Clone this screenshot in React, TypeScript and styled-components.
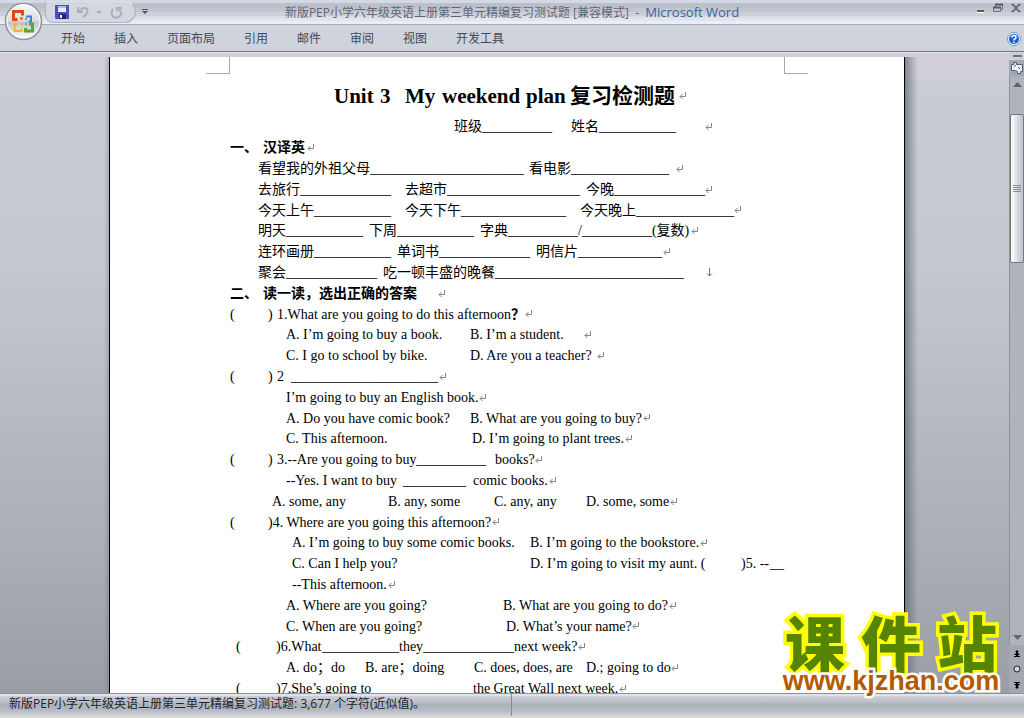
import React from 'react';
import styled, { createGlobalStyle } from 'styled-components';

const GlobalStyle = createGlobalStyle`
  * { box-sizing: border-box; }
  html, body, #root { height: 100%; margin: 0; }
  body { overflow: hidden; font-family: "Open Sans", "Noto Sans CJK SC", sans-serif; font-size: 12px; color: #3f4653; }
  button { border: 0; padding: 0; margin: 0; background: none; font: inherit; color: inherit; }
  svg { display: block; }
`;

const Shell = styled.div`
  height: 100vh;
  display: flex;
  flex-direction: column;
`;

const Header = styled.header`
  position: relative;
  flex: none;
`;

const OfficeButton = styled.button`
  position: absolute;
  left: 4px;
  top: 1px;
`;

const TitleBar = styled.div`
  height: 25px;
  display: grid;
  grid-template-columns: 1fr auto 1fr;
  align-items: start;
  border-bottom: 1px solid #a5abb8;
  background: linear-gradient(#d3d9e4 0 3px, #bcc0c9 3px 8px, #c2c6cf 8px 12px, #cdd0d8 12px 16px, #dadde3 16px 18px, #e3e5e8 18px 21px, #eaedf4 21px);
`;

const QuickAccess = styled.div`
  display: flex;
  align-items: center;
  padding-left: 45px;
  gap: 6px;
`;

const QuickPill = styled.div`
  display: flex;
  align-items: center;
  width: 91px;
  height: 22px;
  margin-top: 1px;
  padding: 0 12px 0 9px;
  justify-content: space-between;
  background: #d3d7df;
  border: 1px solid #b0b4be;
  border-top-color: #dfe2ea;
  border-radius: 0 11px 11px 8px;
`;

const WindowTitle = styled.h1`
  margin: 0;
  font-size: 12px;
  line-height: 25px;
  font-weight: 400;
  color: #5f6672;
  white-space: pre;
`;

const AppName = styled.span`
  color: #2f66a5;
  font-size: 13px;
`;

const WindowControls = styled.div`
  display: flex;
  justify-content: flex-end;
  gap: 8px;
  padding: 3px 3px 0 0;
`;

const Ribbon = styled.nav`
  display: flex;
  align-items: center;
  gap: 29px;
  height: 27px;
  padding: 1px 3px 0 61px;
  background: #cfd3dc;
  border-bottom: 1px solid #747982;
`;

const Tab = styled.button`
  line-height: 24px;
  color: #414957;
`;

const HelpButton = styled.button`
  margin-left: auto;
`;

const Workspace = styled.div`
  flex: 1;
  min-height: 0;
  display: flex;
  background: linear-gradient(#e4e5ea 0 1px, #d1ced9 1px 28px, #c9ccd5 28px, #c5c8d1 210px, #b4b7c0 400px, #a3a7af 560px, #999ea5);
`;

const Desk = styled.main`
  flex: 1;
  min-width: 0;
  display: flex;
  padding: 5px 91px 0 104px;
  overflow: hidden;
`;

const LeftShadow = styled.div`
  flex: none;
  width: 5px;
  background: linear-gradient(to right, transparent, rgba(90, 95, 108, 0.3));
`;

const RightShadow = styled.div`
  flex: none;
  width: 13px;
  background: linear-gradient(to right, rgba(90, 95, 108, 0.65), transparent);
`;

const Page = styled.article`
  flex: 1;
  min-width: 0;
  overflow: hidden;
  background: #fff;
  border: solid #000;
  border-width: 0 1px;
  color: #000;
  font-family: "Liberation Serif", "Noto Sans CJK SC", serif;
  font-size: 14px;
`;

const MarginMarks = styled.div`
  display: flex;
  justify-content: space-between;
  height: 17px;
  padding: 0 96px;
`;

const Corner = styled.span<{ $end?: boolean }>`
  width: 24px;
  border: solid #a6a6b0;
  border-width: ${p => (p.$end ? '0 0 1px 1px' : '0 1px 1px 0')};
`;

const DocBody = styled.div`
  padding: 7px 0 0 120px;
`;

const Line = styled.p`
  display: flex;
  align-items: center;
  height: 21px;
  margin: 0;
  line-height: 21px;
  white-space: pre;
  &:nth-child(5n) { height: 20px; }
`;

const DocTitle = styled.h2`
  display: flex;
  align-items: center;
  height: 30px;
  margin: 0 0 5px;
  font-size: 21px;
  line-height: 30px;
  font-weight: 700;
  white-space: pre;
`;

const Run = styled.span<{ $width?: number; $bold?: boolean }>`
  flex: none;
  ${p => p.$width !== undefined && `width: ${p.$width}px;`}
  font-weight: ${p => (p.$bold ? 700 : 'inherit')};
`;

const StatusBar = styled.footer`
  flex: none;
  height: 25px;
  display: flex;
  align-items: stretch;
  border-top: 1px solid #8d919b;
  border-bottom: 2px solid #dcdad5;
  background: linear-gradient(#dfe2e7 0 2px, #cdd0d8 2px, #b9bcc5 9px, #acb0b9 10px, #b5b9c2 16px, #cfd3dc);
  color: #20242c;
`;

const StatusText = styled.div`
  width: 50%;
  padding-left: 9px;
  line-height: 20px;
  border-right: 1px solid #858a94;
  white-space: pre;
`;

const ScrollColumn = styled.div`
  width: 15px;
  flex: none;
  display: flex;
  flex-direction: column;
  align-items: stretch;
  background: #a3a7b0;
`;

const SplitArea = styled.div`
  height: 8px;
  padding: 3px 2px 3px 4px;
  background: #d1ced9;
`;

const SplitHandle = styled.div`
  height: 2px;
  background: #6c7078;
`;

const ScrollButton = styled.button<{ $height: number }>`
  display: flex;
  align-items: center;
  justify-content: center;
  height: ${p => p.$height}px;
  flex: none;
`;

const Track = styled.div`
  flex: 1;
  display: flex;
  flex-direction: column;
  border-left: 1px solid #8d919a;
  background: #afb3bc;
`;

const Thumb = styled.div`
  height: 149px;
  margin-top: 22px;
  display: flex;
  align-items: center;
  justify-content: center;
  border: 1px solid #747880;
  border-radius: 2px;
  background: linear-gradient(to right, #fbf8ee 0 3px, #e6e6ef 3px 6px, #d3d5df 6px 9px, #c4c8d2 9px);
`;

const Spacer = styled.div`
  flex: 1;
`;

const Brand = styled.a`
  position: absolute;
  right: 19px;
  bottom: 22px;
  width: 228px;
  text-align: center;
  text-decoration: none;
  font-family: "Liberation Sans", "Noto Sans CJK SC", sans-serif;
  font-weight: 700;
  paint-order: stroke fill;
`;

const BrandName = styled.span`
  display: grid;
  grid-template-columns: repeat(3, 1fr);
  font-family: "Noto Sans CJK SC", sans-serif;
  font-size: 60px;
  line-height: 50px;
  font-weight: 900;
  color: #568400;
  -webkit-text-stroke: 7px #ffff00;
`;

const BrandUrl = styled.span`
  display: block;
  font-size: 27px;
  line-height: 30px;
  color: #b45a00;
  -webkit-text-stroke: 5px #fff;
`;

const ReturnMark = () => (
  <svg width="8" height="8" viewBox="0 0 8 8" fill="none" stroke="#858585" aria-hidden="true">
    <path d="M6.5 0V4.5H1M3.5 2L1 4.5L3.5 7" />
  </svg>
);

const BreakMark = () => (
  <svg width="7" height="9" viewBox="0 0 7 9" fill="none" stroke="#707070" aria-hidden="true">
    <path d="M3.5 0V8M1 5.5L3.5 8L6 5.5" />
  </svg>
);

type Part = [column: number, text: string, bold?: boolean];
const RETURN = '\r';
const BREAK = '\n';
const blank = (count: number) => '_'.repeat(count);

const lines: Part[][] = [
  [[224, '班级' + blank(10)], [341, '姓名' + blank(11)], [475, RETURN]],
  [[0, '一、', true], [33, '汉译英', true], [77, RETURN]],
  [[28, '看望我的外祖父母' + blank(22)], [299, '看电影' + blank(14)], [446, RETURN]],
  [[28, '去旅行' + blank(13)], [175, '去超市' + blank(19)], [356, '今晚' + blank(13)], [475, RETURN]],
  [[28, '今天上午' + blank(11)], [175, '今天下午' + blank(15)], [350, '今天晚上' + blank(14)], [504, RETURN]],
  [[28, '明天' + blank(11)], [139, '下周' + blank(11)], [250, '字典' + blank(10) + '/' + blank(10) + '(复数)'], [461, RETURN]],
  [[28, '连环画册' + blank(11)], [167, '单词书' + blank(13)], [306, '明信片' + blank(12)], [433, RETURN]],
  [[28, '聚会' + blank(13)], [153, '吃一顿丰盛的晚餐' + blank(27)], [476, BREAK]],
  [[0, '二、', true], [33, '读一读，选出正确的答案', true], [208, RETURN]],
  [[0, '('], [38, ')'], [47, '1.What are you going to do this afternoon'], [281, '？', true], [295, RETURN]],
  [[56, 'A. I’m going to buy a book.'], [240, 'B. I’m a student.'], [354, RETURN]],
  [[56, 'C. I go to school by bike.'], [240, 'D. Are you a teacher?'], [367, RETURN]],
  [[0, '('], [38, ')'], [47, '2'], [61, blank(21)], [209, RETURN]],
  [[56, 'I’m going to buy an English book.'], [249, RETURN]],
  [[56, 'A. Do you have comic book?'], [240, 'B. What are you going to buy?'], [413, RETURN]],
  [[56, 'C. This afternoon.'], [242, 'D. I’m going to plant trees.'], [395, RETURN]],
  [[0, '('], [38, ')'], [47, '3.--Are you going to buy'], [186, blank(10)], [265, 'books?'], [305, RETURN]],
  [[56, '--Yes. I want to buy'], [173, blank(9)], [243, 'comic books.'], [319, RETURN]],
  [[42, 'A. some, any'], [158, 'B. any, some'], [264, 'C. any, any'], [356, 'D. some, some'], [440, RETURN]],
  [[0, '('], [38, ')4. Where are you going this afternoon?'], [262, RETURN]],
  [[62, 'A. I’m going to buy some comic books.'], [300, 'B. I’m going to the bookstore.'], [470, RETURN]],
  [[62, 'C. Can I help you?'], [300, 'D. I’m going to visit my aunt. ('], [511, ')5. --'], [540, blank(2)]],
  [[62, '--This afternoon.'], [158, RETURN]],
  [[56, 'A. Where are you going?'], [273, 'B. What are you going to do?'], [439, RETURN]],
  [[56, 'C. When are you going?'], [276, 'D. What’s your name?'], [402, RETURN]],
  [[6, '('], [46, ')6.What'], [92, blank(11)], [169, 'they'], [193, blank(13)], [284, 'next week?'], [348, RETURN]],
  [[56, 'A. do；do'], [135, 'B. are；doing'], [244, 'C. does, does, are'], [356, 'D.; going to do'], [441, RETURN]],
  [[6, '('], [46, ')7.She’s going to'], [141, blank(14)], [243, 'the Great Wall next week.'], [389, RETURN]],
];

const titleParts: Part[] = [[104, 'Unit'], [150, '3'], [175, 'My'], [212, 'weekend'], [296, 'plan'], [340, '复习检测题'], [449, RETURN]];

/* Each part starts at its tab column; its width runs to the next column. */
const Parts = ({ parts }: { parts: Part[] }) => (
  <>
    <Run $width={parts[0][0]} />
    {parts.map(([column, text, bold], i) => {
      const next = parts[i + 1];
      return (
        <Run key={i} $width={next ? next[0] - column : undefined} $bold={bold}>
          {text === RETURN ? <ReturnMark /> : text === BREAK ? <BreakMark /> : text}
        </Run>
      );
    })}
  </>
);

const OfficeLogo = () => (
  <svg width="40" height="40" viewBox="0 0 40 40" aria-hidden="true">
    <defs>
      <linearGradient id="orb" x1="0" y1="0" x2="0" y2="1">
        <stop offset="0" stopColor="#fafafb" />
        <stop offset="0.48" stopColor="#dcdde1" />
        <stop offset="0.52" stopColor="#c3c5cb" />
        <stop offset="1" stopColor="#ffffff" />
      </linearGradient>
    </defs>
    <circle cx="19.500" cy="20.500" r="18" fill="url(#orb)" stroke="#8f929a" strokeWidth="1.500" />
    <circle cx="19.500" cy="20" r="16.500" fill="none" stroke="#fff" />
    <g fill="none">
      <path d="M13.500 18.500H9.500V10.500H18.500V14.500" stroke="#dc4a12" strokeWidth="3" />
      <path d="M22 15.500H27V20.500H24.500" stroke="#3f83cc" strokeWidth="2" />
      <path d="M13.500 23.500H10.500V30H17.500V27.500" stroke="#f4b32c" strokeWidth="2" />
      <path d="M25 23H28.500V30H21.500V27" stroke="#65a52f" strokeWidth="3" />
    </g>
    <path d="M16 16h3v3h-3z" fill="#f08121" />
    <path d="M21 17h2v2h-2z" fill="#5b99d8" />
    <path d="M17 22h2v2h-2z" fill="#f4b32c" />
    <path d="M21 22h2v2h-2z" fill="#77b33e" />
  </svg>
);

const SaveIcon = () => (
  <svg width="14" height="14" viewBox="0 0 14 14" aria-hidden="true">
    <path d="M0 0H14V14H1L0 13Z" fill="#4a50c4" />
    <path d="M3 1H11V7H3Z" fill="#e9efff" />
    <path d="M3 1H11V3H3Z" fill="#a9bdf0" />
    <path d="M4 9H11V14H4Z" fill="#23275f" />
    <path d="M5 10H7V13H5Z" fill="#fff" />
  </svg>
);

const UndoIcon = () => (
  <svg width="12" height="13" viewBox="0 0 12 13" fill="none" stroke="#a9afbd" strokeWidth="2" aria-hidden="true">
    <path d="M1 1V6H6M1.500 5.500L4.500 3Q9 .5 10.500 4Q11 7.500 6 11" />
  </svg>
);

const RedoIcon = () => (
  <svg width="13" height="13" viewBox="0 0 13 13" fill="none" stroke="#a9afbd" strokeWidth="2" aria-hidden="true">
    <path d="M3 3Q0 7 3 10.500Q6.500 13 10 10Q12.500 6.500 9 3.500M7 1V5.500M7 2H12" />
  </svg>
);

const Caret = ({ color, bar }: { color: string; bar?: boolean }) => (
  <svg width="6" height="6" viewBox="0 0 6 6" fill={color} aria-hidden="true">
    {bar && <path d="M0 0H6V1H0Z" />}
    <path d="M0 2H6L3 5Z" />
  </svg>
);

const HelpIcon = () => (
  <svg width="14" height="14" viewBox="0 0 14 14" aria-hidden="true">
    <circle cx="7" cy="7" r="6.500" fill="#e8f2ff" stroke="#6c9bd0" />
    <circle cx="7" cy="7" r="5" fill="#1c5fd0" />
    <path d="M5 5.500Q5 3.500 7 3.500T9 5.500Q9 6.500 7 7.500V8.500M7 9.500V11" fill="none" stroke="#fff" strokeWidth="1.500" />
  </svg>
);

const App = () => (
  <>
    <GlobalStyle />
    <Shell>
      <Header>
        <TitleBar>
          <QuickAccess>
            <QuickPill>
              <button aria-label="保存"><SaveIcon /></button>
              <button aria-label="撤消"><UndoIcon /></button>
              <button aria-label="撤消选项"><Caret color="#a3a8b4" /></button>
              <button aria-label="重复"><RedoIcon /></button>
            </QuickPill>
            <button aria-label="自定义快速访问工具栏"><Caret color="#4b515d" bar /></button>
          </QuickAccess>
          <WindowTitle>新版PEP小学六年级英语上册第三单元精编复习测试题 [兼容模式]  -  <AppName>Microsoft Word</AppName></WindowTitle>
          <WindowControls>
            <button aria-label="最小化">
              <svg width="9" height="10" viewBox="0 0 9 10"><path d="M1 7H8V9H1Z" fill="#555a65" /><path d="M1 9H8V10H1Z" fill="#fff" /></svg>
            </button>
            <button aria-label="还原">
              <svg width="10" height="10" viewBox="0 0 10 10" fill="none" stroke="#69758a"><path d="M2.500 4V1.500H9.500V6.500H8M.5 4.500H7.500V8.500H.5Z" /><path d="M2 1.500H10M0 4.500H8" stroke="#555a65" strokeWidth="2" /></svg>
            </button>
            <button aria-label="关闭">
              <svg width="10" height="10" viewBox="0 0 10 10" fill="none" stroke="#697283" strokeWidth="2"><path d="M1.500 1L8.500 9M8.500 1L1.500 9" /><path d="M0 1.500H3M7 1.500H10M0 8.500H3M7 8.500H10" strokeWidth="1" /></svg>
            </button>
          </WindowControls>
        </TitleBar>
        <Ribbon>
          {['开始', '插入', '页面布局', '引用', '邮件', '审阅', '视图', '开发工具'].map(name => <Tab key={name}>{name}</Tab>)}
          <HelpButton aria-label="帮助"><HelpIcon /></HelpButton>
        </Ribbon>
        <OfficeButton aria-label="Office 按钮"><OfficeLogo /></OfficeButton>
      </Header>
      <Workspace>
        <Desk>
          <LeftShadow />
          <Page>
            <MarginMarks><Corner /><Corner $end /></MarginMarks>
            <DocBody>
              <DocTitle><Parts parts={titleParts} /></DocTitle>
              <div>
                {lines.map((parts, i) => <Line key={i}><Parts parts={parts} /></Line>)}
              </div>
            </DocBody>
          </Page>
          <RightShadow />
        </Desk>
        <ScrollColumn>
          <SplitArea><SplitHandle /></SplitArea>
          <ScrollButton $height={16} aria-label="标尺">
            <svg width="12" height="12" viewBox="0 0 12 12" fill="#eef1fa" stroke="#47617f"><path d="M.5 2.500H3V.5H5.500V2.500H11.500V9.500H9.500V11.500H6.500V9.500L4.500 8.500H.5Z" /><path d="M3 5L5 3M7 5L9 7" fill="none" /></svg>
          </ScrollButton>
          <Track>
            <ScrollButton $height={16} aria-label="向上滚动">
              <svg width="9" height="5" viewBox="0 0 9 5" fill="#5c616b"><path d="M0 5L4.500 0L9 5Z" /></svg>
            </ScrollButton>
            <Thumb>
              <svg width="8" height="8" viewBox="0 0 8 8" stroke="#858a94"><path d="M0 .5H8M0 2.500H8M0 4.500H8M0 6.500H8" /></svg>
            </Thumb>
            <Spacer />
            <ScrollButton $height={16} aria-label="向下滚动">
              <svg width="9" height="5" viewBox="0 0 9 5" fill="#5c6a78"><path d="M0 0L4.500 5L9 0Z" /></svg>
            </ScrollButton>
          </Track>
          <ScrollButton $height={16} aria-label="前一页">
            <svg width="6" height="7" viewBox="0 0 6 7"><path d="M3 0L5 2H4V3L6 5H4V6H6V7H0V6H2V5H0L2 3V2H1Z" /></svg>
          </ScrollButton>
          <ScrollButton $height={16} aria-label="选择浏览对象">
            <svg width="8" height="8" viewBox="0 0 8 8"><circle cx="4" cy="4" r="3" fill="#d5d5d5" stroke="#222" /></svg>
          </ScrollButton>
          <ScrollButton $height={16} aria-label="下一页">
            <svg width="6" height="7" viewBox="0 0 6 7"><path d="M3 7L5 5H4V4L6 2H4V1H6V0H0V1H2V2H0L2 4V5H1Z" /></svg>
          </ScrollButton>
        </ScrollColumn>
      </Workspace>
      <StatusBar>
        <StatusText>新版PEP小学六年级英语上册第三单元精编复习测试题: 3,677 个字符(近似值)。</StatusText>
      </StatusBar>
    </Shell>
    <Brand href="#kjzhan">
      <BrandName><span>课</span><span>件</span><span>站</span></BrandName>
      <BrandUrl>www.kjzhan.com</BrandUrl>
    </Brand>
  </>
);

export default App;
